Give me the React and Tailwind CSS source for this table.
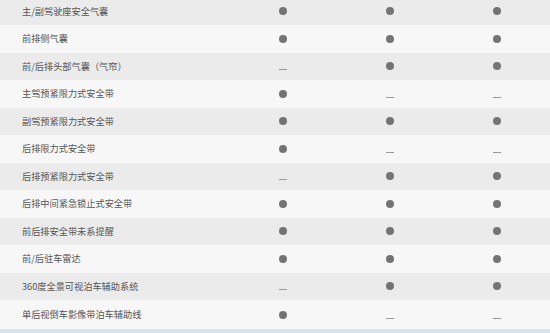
import React from "react";

const rows = [
  { name: "主/副驾驶座安全气囊", v: [1, 1, 1] },
  { name: "前排侧气囊", v: [1, 1, 1] },
  { name: "前/后排头部气囊（气帘）", v: [0, 1, 1] },
  { name: "主驾预紧限力式安全带", v: [1, 0, 0] },
  { name: "副驾预紧限力式安全带", v: [1, 1, 1] },
  { name: "后排限力式安全带", v: [1, 0, 0] },
  { name: "后排预紧限力式安全带", v: [0, 1, 1] },
  { name: "后排中间紧急锁止式安全带", v: [1, 1, 1] },
  { name: "前后排安全带未系提醒", v: [1, 1, 1] },
  { name: "前/后驻车雷达", v: [1, 1, 1] },
  { name: "360度全景可视泊车辅助系统", v: [0, 1, 1] },
  { name: "单后视倒车影像带泊车辅助线", v: [1, 0, 0] },
];

function Mark({ on }) {
  if (on) return <span className="block w-[8px] h-[8px] rounded-full bg-[#747474]" />;
  return <span className="block w-[8px] h-[1px] mt-[7px] bg-[#9a9a9a]" />;
}

export default function App() {
  return (
    <div className="w-[550px] h-[333px] overflow-hidden bg-[#d6e4f0] font-['Noto_Sans_CJK_SC','Noto_Sans',sans-serif]">
      <div className="-mt-[2.5px]">
        {rows.map((r, i) => (
          <div
            key={i}
            className={`flex items-center ${i === rows.length - 1 ? "h-[29px]" : "h-[27.5px]"} ${
              i % 2 === 0 ? "bg-[#ebebeb]" : "bg-[#f7f7f7]"
            }`}
          >
            <div className="w-[229px] pl-[22px] text-[9.2px] text-[#555555] leading-none">
              {r.name}
            </div>
            {r.v.map((on, j) => (
              <div key={j} className="w-[107px] flex justify-center">
                <Mark on={on} />
              </div>
            ))}
          </div>
        ))}
      </div>
    </div>
  );
}
